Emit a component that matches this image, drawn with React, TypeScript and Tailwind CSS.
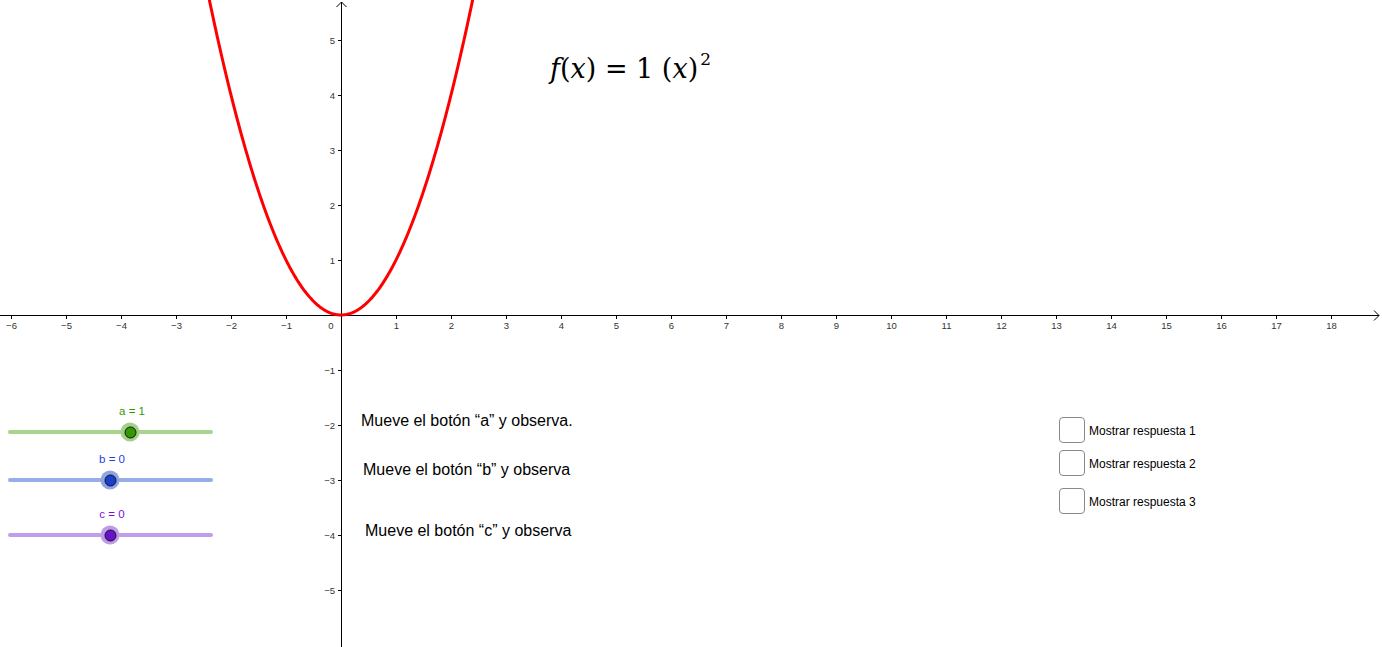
import React from "react";

const OX = 341;
const OY = 315;
const U = 55;

const px = (x: number) => OX + x * U;
const py = (y: number) => OY - y * U;

const xTicks = Array.from({ length: 25 }, (_, i) => i - 6).filter((v) => v !== 0);
const yTicks = [5, 4, 3, 2, 1, -1, -2, -3, -4, -5];

const fmt = (v: number) => (v < 0 ? `\u2212${-v}` : `${v}`);

function Graph() {
  const pts: string[] = [];
  for (let x = -2.45; x <= 2.45; x += 0.02) {
    pts.push(`${px(x).toFixed(2)},${py(x * x).toFixed(2)}`);
  }
  return (
    <svg className="absolute inset-0 font-['Liberation_Sans',Arial,sans-serif]" width={1382} height={647}>
      <line x1={0} y1={OY + 0.5} x2={1379} y2={OY + 0.5} stroke="#000" strokeWidth={1} />
      <polyline points={`1374,${OY - 4.5} 1379,${OY + 0.5} 1374,${OY + 5.5}`} fill="none" stroke="#000" strokeWidth={1} />
      <line x1={OX + 0.5} y1={2} x2={OX + 0.5} y2={647} stroke="#000" strokeWidth={1} />
      <polyline points={`${OX - 4.5},7 ${OX + 0.5},2 ${OX + 5.5},7`} fill="none" stroke="#000" strokeWidth={1} />

      {xTicks.map((v) => (
        <g key={`x${v}`}>
          <line x1={px(v) + 0.5} y1={OY} x2={px(v) + 0.5} y2={OY + 4} stroke="#000" />
          <text x={px(v) + 0.5} y={OY + 13.5} fontSize={9.5} fill="#333" textAnchor="middle">
            {fmt(v)}
          </text>
        </g>
      ))}
      <text x={OX - 10} y={OY + 13.5} fontSize={9.5} fill="#333" textAnchor="middle">
        0
      </text>

      {yTicks.map((v) => (
        <g key={`y${v}`}>
          <line x1={OX - 3} y1={py(v) + 0.5} x2={OX} y2={py(v) + 0.5} stroke="#000" />
          <text x={OX - 6} y={py(v) + 4} fontSize={9.5} fill="#333" textAnchor="end">
            {fmt(v)}
          </text>
        </g>
      ))}

      <polyline points={pts.join(" ")} fill="none" stroke="#ff0000" strokeWidth={3} strokeLinejoin="round" />
    </svg>
  );
}

type SliderProps = {
  value: number;
  label: string;
  className: string;
  trackClass: string;
  haloClass: string;
  fillClass: string;
  textClass: string;
};

// knob position along the 205px track, value range about -5..5
const knobPos = (v: number) => 102 + v * 20;

function Slider({ value, label, className, trackClass, haloClass, fillClass, textClass }: SliderProps) {
  const pos = knobPos(value);
  return (
    <div className={`flex flex-col w-[230px] pl-[8px] ${className}`}>
      <div className="relative h-[13px]">
        <span
          className={`absolute top-0 -translate-x-1/2 text-[11.5px] leading-[13px] whitespace-nowrap ${textClass}`}
          style={{ left: pos + 2 }}
        >
          {label}
        </span>
      </div>
      <div className={`relative mt-[12px] h-[4px] w-[205px] rounded-full ${trackClass}`}>
        <div
          className={`absolute top-1/2 -translate-y-1/2 -translate-x-1/2 w-[19px] h-[19px] rounded-full flex items-center justify-center ${haloClass}`}
          style={{ left: pos }}
        >
          <div className={`w-[12px] h-[12px] rounded-full border border-[#111] ${fillClass}`} />
        </div>
      </div>
    </div>
  );
}

function Check({ label, className = "" }: { label: string; className?: string }) {
  return (
    <label className={`flex items-center gap-[4px] ${className}`}>
      <span className="w-[26px] h-[26px] rounded-[4px] border border-[#8a8a8a] bg-white" />
      <span className="text-[12px] text-black pt-[1px]">{label}</span>
    </label>
  );
}

export default function App() {
  return (
    <div className="relative w-[1382px] h-[647px] bg-white overflow-hidden font-['Liberation_Sans',Arial,sans-serif]">
      <Graph />

      {/* function label */}
      <div className="absolute left-[550px] top-[55px] text-[27px] leading-none text-black whitespace-nowrap font-['DejaVu_Serif','Liberation_Serif',serif]">
        <i>f</i>(<i>x</i>) = 1 (<i>x</i>)
        <sup className="text-[17px] -top-[13px] ml-[2px]">2</sup>
      </div>

      {/* sliders */}
      <div className="absolute left-0 top-[405px] flex flex-col">
        <Slider
          value={1}
          label="a = 1"
          className=""
          trackClass="bg-[#a8d58e]"
          haloClass="bg-[#a3d18a]"
          fillClass="bg-[#339900]"
          textClass="text-[#339900]"
        />
        <Slider
          value={0}
          label="b = 0"
          className="mt-[19px]"
          trackClass="bg-[#99ade8]"
          haloClass="bg-[#8ea4e6]"
          fillClass="bg-[#1a3fcc]"
          textClass="text-[#1a3fdd]"
        />
        <Slider
          value={0}
          label="c = 0"
          className="mt-[26px]"
          trackClass="bg-[#c19deb]"
          haloClass="bg-[#c09aea]"
          fillClass="bg-[#6a0fcc]"
          textClass="text-[#7a10dd]"
        />
      </div>

      {/* instructions */}
      <div className="absolute left-[361px] top-[412px] flex flex-col text-[16px] leading-[18px] text-black whitespace-nowrap">
        <p>Mueve el botón “a” y observa.</p>
        <p className="mt-[31px] ml-[2px]">Mueve el botón “b” y observa</p>
        <p className="mt-[43px] ml-[4px]">Mueve el botón “c” y observa</p>
      </div>

      {/* checkboxes */}
      <div className="absolute left-[1059px] top-[417px] flex flex-col">
        <Check label="Mostrar respuesta 1" />
        <Check label="Mostrar respuesta 2" className="mt-[7px]" />
        <Check label="Mostrar respuesta 3" className="mt-[12px]" />
      </div>
    </div>
  );
}
